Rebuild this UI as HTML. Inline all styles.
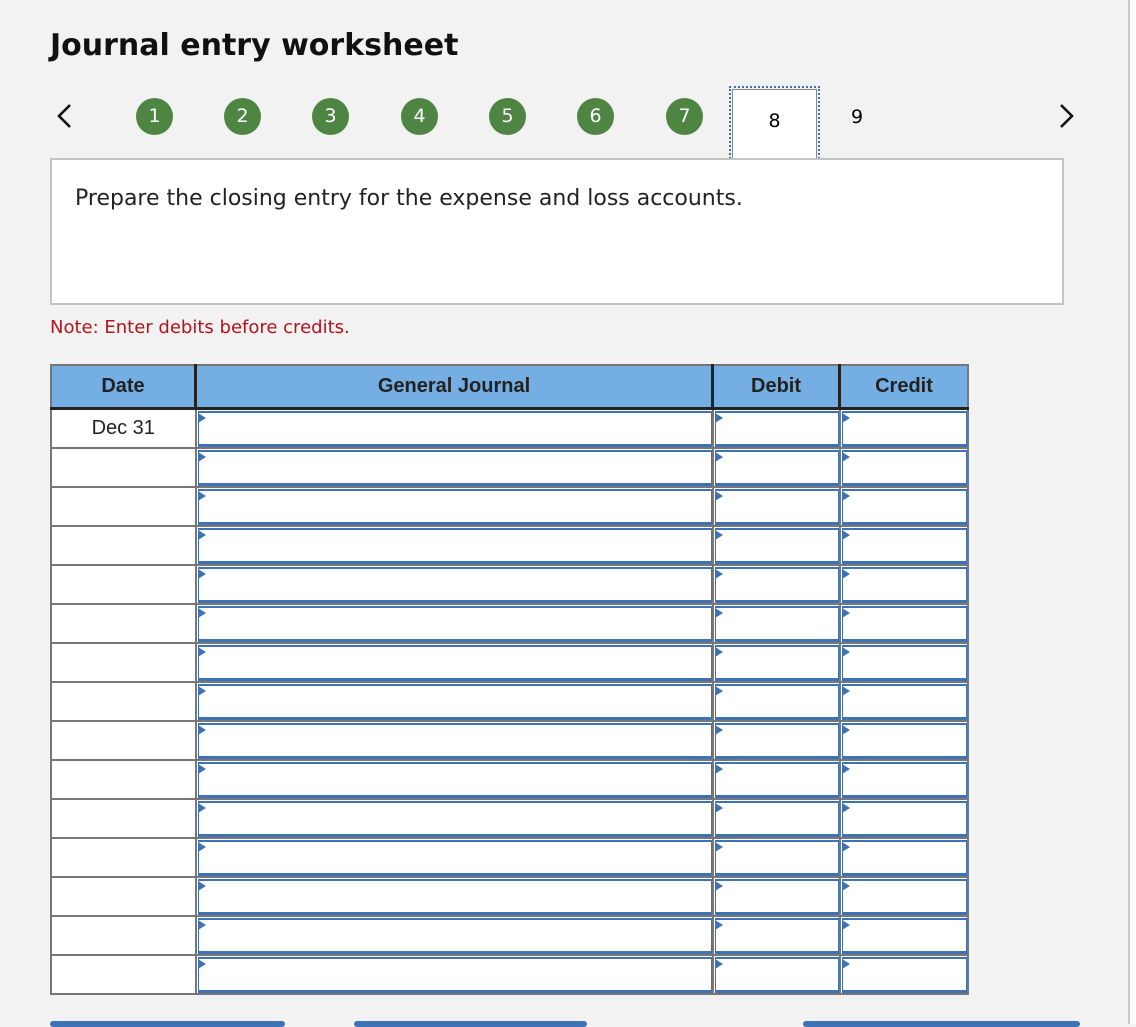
<!DOCTYPE html>
<html><head><style>
body{margin:0;width:1136px;height:1024px;background:#f2f2f2;font-family:"Liberation Sans",sans-serif;position:relative;overflow:hidden}
.edge{position:absolute;left:1128px;top:0;width:2px;height:1024px;background:#c8c8c8}
.edge2{position:absolute;left:1130px;top:0;width:6px;height:1024px;background:#fafafa}
h1{position:absolute;left:50px;top:28px;margin:0;font-family:"DejaVu Sans",sans-serif;font-size:30px;font-weight:bold;color:#111}
.c{position:absolute;top:98px;width:37px;height:37px;border-radius:50%;background:#4e8542;color:#fff;font-family:"DejaVu Sans",sans-serif;font-size:19px;line-height:37px;text-align:center}
.chev{position:absolute;top:103px}
.box8{position:absolute;left:729px;top:86px;width:87px;height:72px;border:2px dotted #3d72b4;}
.box8 div{position:absolute;left:1px;top:1px;right:1px;bottom:1px;border:1px solid #888;background:#fff;text-align:center;line-height:62px;font-family:"DejaVu Sans",sans-serif;font-size:19px}
.n9{position:absolute;left:851px;top:106px;font-family:"DejaVu Sans",sans-serif;font-size:19px}
.prompt{position:absolute;left:50px;top:158px;width:1010px;height:143px;background:#fff;border:2px solid #c4c4c4}
.prompt p{margin:0;position:absolute;left:23px;top:26px;font-family:"DejaVu Sans",sans-serif;font-size:22px;color:#222}
.note{position:absolute;left:50px;top:317px;font-family:"DejaVu Sans",sans-serif;font-size:18px;color:#b5121b}
table{position:absolute;left:50px;top:364px;border-collapse:collapse;border:2px solid #777}
th{background:#74aee2;height:41px;font-size:20px;color:#222;border-right:3px solid #222;border-bottom:3px solid #222;padding:0}
th:last-child{border-right:none}
td{border:2px solid #777;height:37px;padding:0;background:#fff;position:relative;font-size:20px;text-align:center;color:#222}
td.i div{position:absolute;left:1px;top:1px;right:0;bottom:0;border-top:2px solid #3d72b4;border-bottom:3px solid #3d72b4;border-left:1px solid #3d72b4;border-right:1px solid #3d72b4}
td.i div:before{content:"";position:absolute;left:-1px;top:0;border-left:8px solid #3d72b4;border-top:5px solid transparent;border-bottom:5px solid transparent}
.btn{position:absolute;top:1021px;height:6px;background:#3d72b4;border-radius:3px}
</style></head><body>
<div class="edge"></div><div class="edge2"></div>
<h1>Journal entry worksheet</h1>
<svg class="chev" style="left:55px" width="18" height="26" viewBox="0 0 18 26"><path d="M15 2 L4 13 L15 24" fill="none" stroke="#111" stroke-width="2.6"/></svg>
<div class="c" style="left:136px">1</div>
<div class="c" style="left:224px">2</div>
<div class="c" style="left:312px">3</div>
<div class="c" style="left:401px">4</div>
<div class="c" style="left:489px">5</div>
<div class="c" style="left:577px">6</div>
<div class="c" style="left:666px">7</div>
<div class="box8"><div>8</div></div>
<div class="n9">9</div>
<svg class="chev" style="left:1058px" width="18" height="26" viewBox="0 0 18 26"><path d="M3 2 L14 13 L3 24" fill="none" stroke="#111" stroke-width="2.6"/></svg>
<div class="prompt"><p>Prepare the closing entry for the expense and loss accounts.</p></div>
<div class="note">Note: Enter debits before credits.</div>
<table>
<tr><th style="width:142px">Date</th><th style="width:514px">General Journal</th><th style="width:124px">Debit</th><th style="width:126px">Credit</th></tr>
<tr><td>Dec 31</td><td class="i"><div></div></td><td class="i"><div></div></td><td class="i"><div></div></td></tr>
<tr><td></td><td class="i"><div></div></td><td class="i"><div></div></td><td class="i"><div></div></td></tr>
<tr><td></td><td class="i"><div></div></td><td class="i"><div></div></td><td class="i"><div></div></td></tr>
<tr><td></td><td class="i"><div></div></td><td class="i"><div></div></td><td class="i"><div></div></td></tr>
<tr><td></td><td class="i"><div></div></td><td class="i"><div></div></td><td class="i"><div></div></td></tr>
<tr><td></td><td class="i"><div></div></td><td class="i"><div></div></td><td class="i"><div></div></td></tr>
<tr><td></td><td class="i"><div></div></td><td class="i"><div></div></td><td class="i"><div></div></td></tr>
<tr><td></td><td class="i"><div></div></td><td class="i"><div></div></td><td class="i"><div></div></td></tr>
<tr><td></td><td class="i"><div></div></td><td class="i"><div></div></td><td class="i"><div></div></td></tr>
<tr><td></td><td class="i"><div></div></td><td class="i"><div></div></td><td class="i"><div></div></td></tr>
<tr><td></td><td class="i"><div></div></td><td class="i"><div></div></td><td class="i"><div></div></td></tr>
<tr><td></td><td class="i"><div></div></td><td class="i"><div></div></td><td class="i"><div></div></td></tr>
<tr><td></td><td class="i"><div></div></td><td class="i"><div></div></td><td class="i"><div></div></td></tr>
<tr><td></td><td class="i"><div></div></td><td class="i"><div></div></td><td class="i"><div></div></td></tr>
<tr><td></td><td class="i"><div></div></td><td class="i"><div></div></td><td class="i"><div></div></td></tr>
</table>
<div class="btn" style="left:50px;width:235px"></div>
<div class="btn" style="left:354px;width:233px"></div>
<div class="btn" style="left:803px;width:277px"></div>
</body></html>
